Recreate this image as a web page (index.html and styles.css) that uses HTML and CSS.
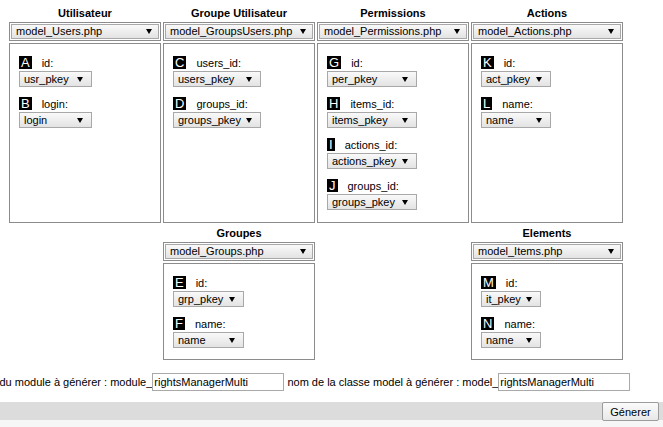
FILE: index.html
```html
<!DOCTYPE html>
<html lang="fr">
<head>
<meta charset="utf-8">
<title>Générateur</title>
<link rel="stylesheet" href="styles.css">
</head>
<body>
<div class="page">
  <div class="grid row1">
    <div class="col">
      <div class="title">Utilisateur</div>
      <div class="pick"><div class="sel"><span>model_Users.php</span><i class="arrow"></i></div></div>
      <div class="box">
        <div class="field"><div class="lab"><span class="badge">A</span><span class="name">id:</span></div><div class="sel w73"><span>usr_pkey</span><i class="arrow"></i></div></div>
        <div class="field"><div class="lab"><span class="badge">B</span><span class="name">login:</span></div><div class="sel w73"><span>login</span><i class="arrow"></i></div></div>
      </div>
    </div>
    <div class="col">
      <div class="title">Groupe Utilisateur</div>
      <div class="pick"><div class="sel"><span>model_GroupsUsers.php</span><i class="arrow"></i></div></div>
      <div class="box">
        <div class="field"><div class="lab"><span class="badge">C</span><span class="name">users_id:</span></div><div class="sel w88"><span>users_pkey</span><i class="arrow"></i></div></div>
        <div class="field"><div class="lab"><span class="badge">D</span><span class="name">groups_id:</span></div><div class="sel w88"><span>groups_pkey</span><i class="arrow"></i></div></div>
      </div>
    </div>
    <div class="col">
      <div class="title">Permissions</div>
      <div class="pick"><div class="sel"><span>model_Permissions.php</span><i class="arrow"></i></div></div>
      <div class="box">
        <div class="field"><div class="lab"><span class="badge">G</span><span class="name">id:</span></div><div class="sel w90"><span>per_pkey</span><i class="arrow"></i></div></div>
        <div class="field"><div class="lab"><span class="badge">H</span><span class="name">items_id:</span></div><div class="sel w90"><span>items_pkey</span><i class="arrow"></i></div></div>
        <div class="field"><div class="lab"><span class="badge">I</span><span class="name">actions_id:</span></div><div class="sel w90"><span>actions_pkey</span><i class="arrow"></i></div></div>
        <div class="field"><div class="lab"><span class="badge">J</span><span class="name">groups_id:</span></div><div class="sel w90"><span>groups_pkey</span><i class="arrow"></i></div></div>
      </div>
    </div>
    <div class="col">
      <div class="title">Actions</div>
      <div class="pick"><div class="sel"><span>model_Actions.php</span><i class="arrow"></i></div></div>
      <div class="box">
        <div class="field"><div class="lab"><span class="badge">K</span><span class="name">id:</span></div><div class="sel w70"><span>act_pkey</span><i class="arrow"></i></div></div>
        <div class="field"><div class="lab"><span class="badge">L</span><span class="name">name:</span></div><div class="sel w70"><span>name</span><i class="arrow"></i></div></div>
      </div>
    </div>
  </div>

  <div class="grid row2">
    <div class="col c2">
      <div class="title">Groupes</div>
      <div class="pick"><div class="sel"><span>model_Groups.php</span><i class="arrow"></i></div></div>
      <div class="box">
        <div class="field"><div class="lab"><span class="badge">E</span><span class="name">id:</span></div><div class="sel w71"><span>grp_pkey</span><i class="arrow"></i></div></div>
        <div class="field"><div class="lab"><span class="badge">F</span><span class="name">name:</span></div><div class="sel w71"><span>name</span><i class="arrow"></i></div></div>
      </div>
    </div>
    <div class="col c4">
      <div class="title">Elements</div>
      <div class="pick"><div class="sel"><span>model_Items.php</span><i class="arrow"></i></div></div>
      <div class="box">
        <div class="field"><div class="lab"><span class="badge">M</span><span class="name">id:</span></div><div class="sel w60"><span>it_pkey</span><i class="arrow"></i></div></div>
        <div class="field"><div class="lab"><span class="badge">N</span><span class="name">name:</span></div><div class="sel w60"><span>name</span><i class="arrow"></i></div></div>
      </div>
    </div>
  </div>

  <div class="gen">nom du module à générer : module_<input class="txt" type="text" value="rightsManagerMulti"> nom de la classe model à générer : model_<input class="txt" type="text" value="rightsManagerMulti"></div>

  <div class="bar"><button class="btn" type="button">Génerer</button></div>
  <div class="foot"></div>
</div>
</body>
</html>
```

FILE: styles.css
```css
* { box-sizing: border-box; }
html, body { margin: 0; padding: 0; }
body {
  font-family: "Liberation Sans", Arial, sans-serif;
  font-size: 11px;
  color: #000;
  background: #fff;
  width: 663px;
  height: 427px;
  overflow: hidden;
}
.page { padding-top: 6px; }
.grid {
  display: grid;
  grid-template-columns: repeat(4, 152px);
  column-gap: 2px;
  padding-left: 9px;
}
.row2 { margin-top: 3px; }
.c2 { grid-column: 2; }
.c4 { grid-column: 4; }
.col { display: flex; flex-direction: column; }
.title {
  font-weight: bold;
  text-align: center;
  line-height: 14px;
  height: 14px;
  white-space: nowrap;
}
.pick {
  margin-top: 2px;
  height: 19px;
  border: 1px solid #8c8c8c;
  padding: 1px;
}
.sel {
  display: flex;
  align-items: center;
  justify-content: space-between;
  height: 15px;
  border: 1px solid #a8a8a8;
  background: linear-gradient(#f9f9f9, #e3e3e3);
  padding: 0 6px 0 4px;
  line-height: 13px;
  white-space: nowrap;
}
.arrow {
  display: block;
  width: 0;
  height: 0;
  border-left: 3px solid transparent;
  border-right: 3px solid transparent;
  border-top: 5px solid #000;
  flex: none;
}
.box {
  margin-top: 2px;
  border: 1px solid #8c8c8c;
  padding: 12px 9px 0;
}
.row1 .box { height: 180px; }
.row2 .box { height: 97px; }
.field { margin-bottom: 10px; }
.lab {
  display: flex;
  align-items: flex-end;
  height: 15px;
  padding-bottom: 2px;
}
.badge {
  display: block;
  background: #000;
  color: #fff;
  font-size: 13px;
  line-height: 13px;
  height: 13px;
  padding: 0 2px;
}
.name { margin-left: 10px; line-height: 12px; }
.field .sel { height: 16px; padding-right: 8px; }
.w73 { width: 73px; }
.w88 { width: 88px; }
.w90 { width: 90px; }
.w70 { width: 70px; }
.w71 { width: 71px; }
.w60 { width: 60px; }
.gen {
  margin-top: 13px;
  margin-left: -25px;
  height: 18px;
  line-height: 18px;
  white-space: nowrap;
}
.txt {
  display: inline-block;
  vertical-align: top;
  width: 132px;
  height: 18px;
  margin: 0;
  padding: 0 1px;
  border: 1px solid #a9a9a9;
  font: inherit;
  color: #000;
  background: #fff;
}
.bar {
  margin-top: 11px;
  height: 18px;
  background: #dcdcdc;
  display: flex;
  justify-content: flex-end;
  padding-right: 4px;
}
.btn {
  width: 57px;
  height: 19px;
  margin: 0;
  padding: 0;
  border: 1px solid #9c9c9c;
  border-radius: 2px;
  background: linear-gradient(#fbfbfb, #e8e8e8);
  font: inherit;
  color: #000;
}
.foot { height: 7px; background: #f6f6f6; }
```
